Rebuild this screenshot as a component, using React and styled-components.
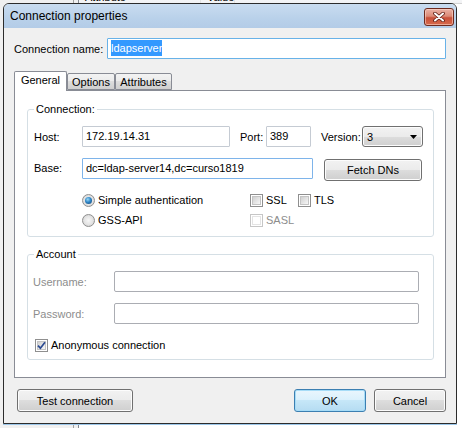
import styled, { createGlobalStyle } from "styled-components";

const GlobalStyle = createGlobalStyle`
  html, body {
    margin: 0;
    padding: 0;
  }
  body {
    width: 462px;
    height: 428px;
    overflow: hidden;
    font-family: "Liberation Sans", Arial, sans-serif;
    font-size: 11px;
    color: #000;
  }
  * { box-sizing: border-box; }
`;

const Desktop = styled.div`
  position: relative;
  width: 462px;
  height: 428px;
  display: flex;
  background: #fff;
  overflow: hidden;
`;

const SidePane = styled.div`
  width: 74px;
  background: #f0f0f0;
  border-right: 1px solid #a0a0a0;
`;

const Splitter = styled.div`
  width: 5px;
  background: #f0f0f0;
  border-right: 1px solid #828790;
`;

const ListPane = styled.div`
  flex: 1;
  background: #fff;
  display: flex;
  flex-direction: column;
`;

const ListHeader = styled.div`
  margin-top: -9px;
  height: 13px;
  display: flex;
  border-bottom: 1px solid #d5d5d5;
  background: linear-gradient(#ffffff, #f1f2f4);
`;

const HeaderCell = styled.div`
  width: ${(p) => p.$w || "auto"};
  padding-left: 6px;
  border-right: 1px solid #e3e3e3;
  line-height: 13px;
`;

const Window = styled.div`
  position: absolute;
  left: 3px;
  top: 3px;
  width: 454px;
  height: 421px;
  border: 1px solid #2c2c2c;
  border-radius: 6px 6px 0 0;
  display: flex;
  flex-direction: column;
  overflow: hidden;
  box-shadow: 0 1px 0 #9cc7ea;
`;

const TitleBar = styled.div`
  height: 24px;
  display: flex;
  justify-content: space-between;
  align-items: flex-start;
  padding: 4px 2px 0 6px;
  background: linear-gradient(#c9dcf0, #b9d1ea 60%, #b3cce7);
`;

const Title = styled.div`
  font-size: 12px;
  line-height: 16px;
  color: #000;
`;

const CloseButton = styled.div`
  width: 30px;
  height: 18px;
  border: 1px solid #6e2a1e;
  border-radius: 3px;
  display: flex;
  align-items: center;
  justify-content: center;
  background: linear-gradient(#eab2a5 0%, #dc8a76 45%, #c8503a 55%, #d76a4c 100%);
  box-shadow: inset 0 0 0 1px rgba(255, 220, 210, 0.55);
`;

const Body = styled.div`
  flex: 1;
  background: #f0f0f0;
  padding: 10px 10px 0 10px;
  display: flex;
  flex-direction: column;
`;

const NameRow = styled.div`
  display: flex;
  align-items: center;
  height: 21px;
`;

const Label = styled.div`
  width: ${(p) => p.$w}px;
  margin-left: ${(p) => p.$ml || 0}px;
  color: ${(p) => (p.$disabled ? "#8d8d8d" : "#000")};
  white-space: nowrap;
`;

const borders = {
  focus: "#68b2e8",
  normal: "#c5cbd3",
  blue: "#7eb4ea",
  disabled: "#abadb3",
};

const TextBox = styled.div`
  width: ${(p) => p.$w}px;
  height: 21px;
  border: 1px solid ${(p) => borders[p.$tone || "normal"]};
  border-top-color: ${(p) => (p.$tone === "normal" ? "#abadb3" : borders[p.$tone || "normal"])};
  border-radius: ${(p) => (p.$tone === "disabled" ? "2px" : "1px")};
  background: #fff;
  padding: 0 3px;
  line-height: 19px;
  white-space: nowrap;
  overflow: hidden;
`;

const Selected = styled.span`
  background: #3399ff;
  color: #fff;
  padding: 2px 0;
`;

const TabStrip = styled.div`
  margin-top: 12px;
  height: 19px;
  display: flex;
  align-items: flex-end;
  position: relative;
  z-index: 1;
`;

const Tab = styled.div`
  width: ${(p) => p.$w}px;
  height: ${(p) => (p.$active ? 20 : 17)}px;
  margin-bottom: ${(p) => (p.$active ? -1 : 0)}px;
  border: 1px solid #898c95;
  border-bottom: ${(p) => (p.$active ? "none" : "1px solid #898c95")};
  border-radius: 2px 2px 0 0;
  background: ${(p) =>
    p.$active ? "#fff" : "linear-gradient(#f3f3f3, #ebebeb 50%, #dddddd 50%, #cfcfcf)"};
  display: flex;
  justify-content: center;
  padding-top: ${(p) => (p.$active ? 1 : 1)}px;
  line-height: 14px;
`;

const Panel = styled.div`
  height: 288px;
  border: 1px solid #898c95;
  background: #fff;
  padding: 12px 0 0 12px;
  display: flex;
  flex-direction: column;
`;

const Group = styled.fieldset`
  margin: ${(p) => p.$mt || 0}px 0 0 0;
  width: 407px;
  min-width: 0;
  border: 1px solid #d5dfe5;
  border-radius: 3px;
  padding: 10px 0 6px ${(p) => p.$pl}px;
  display: flex;
  flex-direction: column;
`;

const Legend = styled.legend`
  padding: 0 2px;
  margin-left: ${(p) => p.$ml || 0}px;
  line-height: 13px;
  font-size: 11px;
`;

const Row = styled.div`
  display: flex;
  align-items: ${(p) => p.$align || "center"};
  height: ${(p) => p.$h || 21}px;
  margin-top: ${(p) => p.$mt || 0}px;
  padding-left: ${(p) => p.$pl || 0}px;
`;

const Button = styled.div`
  width: ${(p) => p.$w}px;
  height: ${(p) => p.$h || 23}px;
  margin-left: ${(p) => p.$ml || 0}px;
  margin-top: ${(p) => p.$mt || 0}px;
  border: 1px solid ${(p) => (p.$default ? "#3c7fb1" : "#707070")};
  border-radius: 3px;
  display: flex;
  align-items: center;
  justify-content: center;
  background: ${(p) =>
    p.$default
      ? "linear-gradient(#eaf6fd, #d9f0fc 50%, #c6e7f8 50%, #b5dcf2)"
      : "linear-gradient(#f2f2f2, #ebebeb 50%, #dddddd 50%, #cfcfcf)"};
  box-shadow: inset 0 0 0 1px ${(p) => (p.$default ? "#a6dcf7" : "#fcfcfc")};
`;

const Select = styled.div`
  width: 61px;
  height: 21px;
  border: 1px solid #707070;
  border-radius: 3px;
  display: flex;
  align-items: center;
  justify-content: space-between;
  padding: 0 5px 0 4px;
  background: linear-gradient(#f2f2f2, #ebebeb 50%, #dddddd 50%, #cfcfcf);
  box-shadow: inset 0 0 0 1px #fcfcfc;
`;

const Option = styled.label`
  display: flex;
  align-items: center;
  gap: 3px;
  width: ${(p) => (p.$w ? `${p.$w}px` : "auto")};
  color: ${(p) => (p.$disabled ? "#8d8d8d" : "#000")};
`;

const RadioDot = styled.span`
  width: 13px;
  height: 13px;
  border-radius: 50%;
  border: 1px solid #8f8f8f;
  background: radial-gradient(circle at 50% 50%, #f6f6f6 0, #e3e3e3 55%, #c8c8c8 100%);
  display: flex;
  align-items: center;
  justify-content: center;

  &::after {
    content: "";
    display: ${(p) => (p.$checked ? "block" : "none")};
    width: 7px;
    height: 7px;
    border-radius: 50%;
    background: radial-gradient(circle at 40% 35%, #9ad9f7 0, #2e86c7 45%, #123f6f 100%);
  }
`;

const CheckBox = styled.span`
  width: 13px;
  height: 13px;
  border: 1px solid ${(p) => (p.$disabled ? "#c6c6c6" : "#8f8f8f")};
  background: #fff;
  padding: 1px;
  display: flex;
`;

const CheckInner = styled.span`
  flex: 1;
  border: 1px solid ${(p) => (p.$disabled ? "#e4e4e4" : "#c4c4c4")};
  background: ${(p) =>
    p.$disabled ? "#fff" : "linear-gradient(135deg, #d0d0d0, #f7f7f7)"};
  display: flex;
  align-items: center;
  justify-content: center;
  overflow: visible;
`;

const Footer = styled.div`
  margin-top: 11px;
  display: flex;
  align-items: center;
`;

const Spacer = styled.div`
  flex: 1;
`;

function Radio({ checked, children }) {
  return (
    <Option $w={168}>
      <RadioDot $checked={checked} />
      {children}
    </Option>
  );
}

function Check({ checked, disabled, w, children }) {
  return (
    <Option $w={w} $disabled={disabled}>
      <CheckBox $disabled={disabled}>
        <CheckInner $disabled={disabled}>
          {checked && (
            <svg width="9" height="9" viewBox="0 0 9 9" style={{ margin: -2 }}>
              <path d="M1 4.6 L3.4 7.2 L8 1.2" fill="none" stroke="#2b4a91" strokeWidth="1.7" />
            </svg>
          )}
        </CheckInner>
      </CheckBox>
      {children}
    </Option>
  );
}

export default function App() {
  return (
    <>
      <GlobalStyle />
      <Desktop>
        <SidePane />
        <Splitter />
        <ListPane>
          <ListHeader>
            <HeaderCell $w="122px">Attribute</HeaderCell>
            <HeaderCell>Value</HeaderCell>
          </ListHeader>
        </ListPane>

        <Window>
          <TitleBar>
            <Title>Connection properties</Title>
            <CloseButton>
              <svg width="14" height="10" viewBox="0 0 14 10">
                <path d="M3 1.5 L11 8.5 M11 1.5 L3 8.5" stroke="#5b1c12" strokeWidth="3.6" strokeLinecap="round" />
                <path d="M3 1.5 L11 8.5 M11 1.5 L3 8.5" stroke="#ffffff" strokeWidth="2" strokeLinecap="round" />
              </svg>
            </CloseButton>
          </TitleBar>

          <Body>
            <NameRow>
              <Label $w={93}>Connection name:</Label>
              <TextBox $w={339} $tone="focus">
                <Selected>ldapserver</Selected>
              </TextBox>
            </NameRow>

            <TabStrip>
              <Tab $w={53} $active>General</Tab>
              <Tab $w={48}>Options</Tab>
              <Tab $w={57}>Attributes</Tab>
            </TabStrip>

            <Panel>
              <Group $pl={6}>
                <Legend>Connection:</Legend>
                <Row>
                  <Label $w={48}>Host:</Label>
                  <TextBox $w={148}>172.19.14.31</TextBox>
                  <Label $w={26} $ml={10}>Port:</Label>
                  <TextBox $w={45}>389</TextBox>
                  <Label $w={41} $ml={10}>Version:</Label>
                  <Select>
                    <span>3</span>
                    <svg width="7" height="4" viewBox="0 0 7 4">
                      <path d="M0 0 H7 L3.5 4 Z" fill="#000" />
                    </svg>
                  </Select>
                </Row>
                <Row $mt={11} $align="flex-start">
                  <Label $w={48} style={{ lineHeight: "21px" }}>Base:</Label>
                  <TextBox $w={231} $tone="blue">dc=ldap-server14,dc=curso1819</TextBox>
                  <Button $w={98} $h={22} $ml={11} $mt={1}>Fetch DNs</Button>
                </Row>
                <Row $mt={11} $h={20} $pl={48}>
                  <Radio checked>Simple authentication</Radio>
                  <Check w={48}>SSL</Check>
                  <Check>TLS</Check>
                </Row>
                <Row $h={20} $pl={48}>
                  <Radio>GSS-API</Radio>
                  <Check disabled>SASL</Check>
                </Row>
              </Group>

              <Group $pl={5} $mt={11}>
                <Legend $ml={1}>Account</Legend>
                <Row>
                  <Label $w={81} $disabled>Username:</Label>
                  <TextBox $w={305} $tone="disabled" />
                </Row>
                <Row $mt={11}>
                  <Label $w={81} $disabled>Password:</Label>
                  <TextBox $w={305} $tone="disabled" />
                </Row>
                <Row $mt={13} $h={16} $pl={2}>
                  <Check checked>Anonymous connection</Check>
                </Row>
              </Group>
            </Panel>

            <Footer>
              <Button $w={116} $ml={3}>Test connection</Button>
              <Spacer />
              <Button $w={72} $default>OK</Button>
              <Button $w={72} $ml={8}>Cancel</Button>
            </Footer>
          </Body>
        </Window>
      </Desktop>
    </>
  );
}
